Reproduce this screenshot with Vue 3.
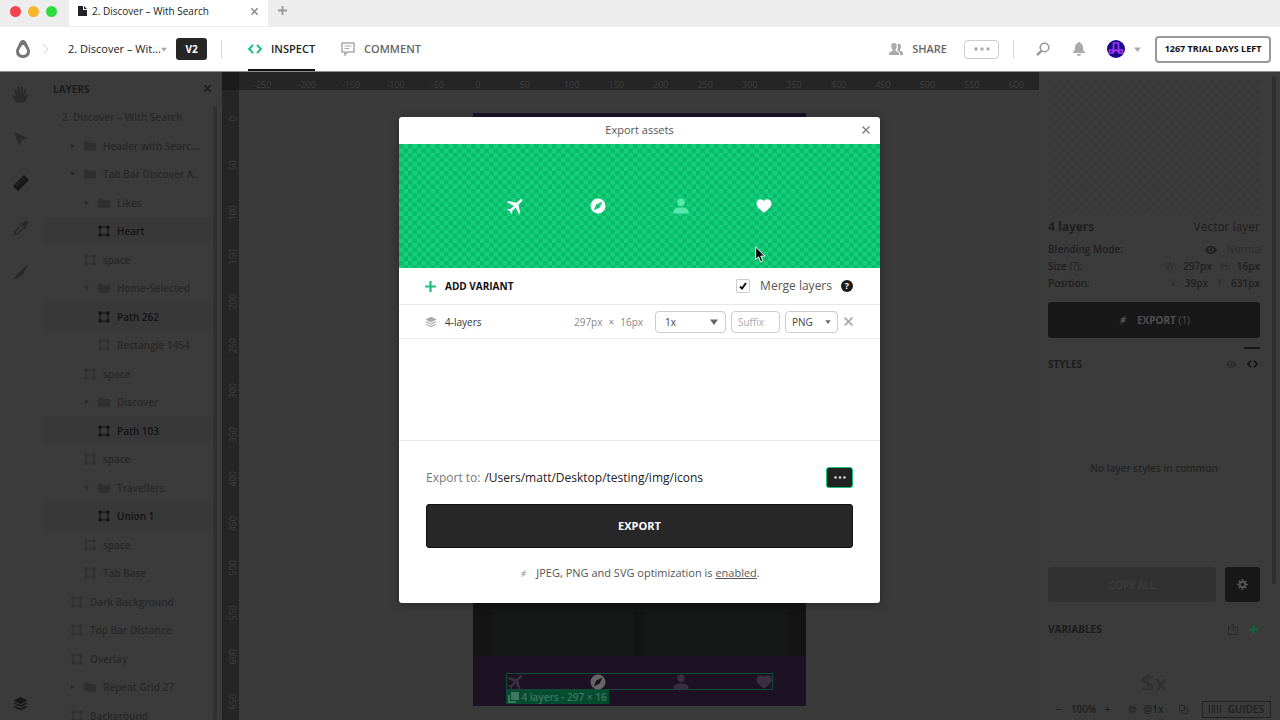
<template>
  <div class="app">
    <svg class="sprite" aria-hidden="true">
      <symbol id="plane" viewBox="2 3 18 18">
        <path transform="rotate(45 12 12)" d="M21 16v-2l-8-5V3.500C13 2.700 12.300 2 11.500 2S10 2.700 10 3.500V9l-8 5v2l8-2.500V19l-2 1.500V22l3.500-1 3.500 1v-1.500L13 19v-5.500z" />
      </symbol>
      <symbol id="compass" viewBox="0 0 16 16">
        <path fill-rule="evenodd" d="M8 .5a7.500 7.500 0 1 1 0 15 7.500 7.500 0 0 1 0-15zM12.400 3.600 6.300 6.500 3.600 12.400 9.700 9.500z" />
      </symbol>
      <symbol id="person" viewBox="0 0 16 16">
        <circle cx="8" cy="4.200" r="3.700" />
        <path d="M.5 15.500v-2C.5 11 4 9.500 8 9.500s7.500 1.500 7.500 4v2z" />
      </symbol>
      <symbol id="heart" viewBox="0 0 16 16">
        <path d="M8 14.800C3.500 11.200.5 8.700.5 5.500.5 3 2.300 1.200 4.600 1.200c1.400 0 2.600.7 3.400 1.800.8-1.100 2-1.800 3.400-1.800 2.300 0 4.100 1.800 4.100 4.300 0 3.200-3 5.700-7.500 9.300z" />
      </symbol>
      <symbol id="folder" viewBox="0 0 12 12">
        <path d="M0 3c0-1 .4-1.500 1.200-1.500H4L5.500 3H11c.7 0 1 .4 1 1v5.500c0 .7-.3 1-1 1H1c-.7 0-1-.3-1-1z" />
      </symbol>
      <symbol id="vector" viewBox="0 0 12 12">
        <path d="M2 2h8v8H2z" fill="none" stroke="currentColor" />
        <path d="M.5.5h3v3h-3zM8.500.5h3v3h-3zM.5 8.500h3v3h-3zM8.500 8.500h3v3h-3z" />
      </symbol>
      <symbol id="stack" viewBox="0 0 16 16">
        <path d="M8 1l7.500 3.700L8 8.400.5 4.700zM2.300 7.100 8 9.900l5.700-2.800 1.800.9L8 11.700.5 8zM2.300 10.500 8 13.300l5.700-2.800 1.800.9L8 15.100.5 11.400z" />
      </symbol>
      <symbol id="bolt" viewBox="0 0 12 12">
        <path d="M10.800.5 3 4.500 4.800 6 1 7.600 5 8 2 11.500 9.800 7.200 7.300 6 11.200 4.200 7.600 4z" />
      </symbol>
      <symbol id="cross" viewBox="0 0 10 10">
        <path d="M1.500 1.500l7 7M8.500 1.500l-7 7" fill="none" stroke="currentColor" stroke-width="1.600" />
      </symbol>
      <symbol id="plus" viewBox="0 0 10 10">
        <path d="M5 0v10M0 5h10" fill="none" stroke="currentColor" stroke-width="2" />
      </symbol>
      <symbol id="code" viewBox="0 0 14 10">
        <path d="M5 .8 1.200 5 5 9.200M9 .8 12.800 5 9 9.200" fill="none" stroke="currentColor" stroke-width="2" />
      </symbol>
      <symbol id="down" viewBox="0 0 8 6"><path d="M0 .5h8L4 6z" /></symbol>
      <symbol id="dots" viewBox="0 0 16 4">
        <circle cx="2" cy="2" r="1.700" /><circle cx="8" cy="2" r="1.700" /><circle cx="14" cy="2" r="1.700" />
      </symbol>
      <symbol id="eye" viewBox="0 0 12 8">
        <path fill-rule="evenodd" d="M6 0c3 0 5 2 6 4-1 2-3 4-6 4S1 6 0 4c1-2 3-4 6-4zm0 1.200a2.800 2.800 0 1 0 0 5.600 2.800 2.800 0 0 0 0-5.600zM6 2.500a1.500 1.500 0 1 1 0 3 1.500 1.500 0 0 1 0-3z" />
      </symbol>
      <symbol id="gear" viewBox="0 0 12 12">
        <circle cx="6" cy="6" r="3" fill="none" stroke="currentColor" stroke-width="2" />
        <path d="M6 0v3M6 9v3M0 6h3M9 6h3M1.800 1.800l2 2M8.200 8.200l2 2M1.800 10.200l2-2M8.200 3.800l2-2" stroke="currentColor" stroke-width="1.600" />
      </symbol>
    </svg>

    <header class="tabs">
      <div class="lights">
        <i class="light red"></i>
        <i class="light amber"></i>
        <i class="light green"></i>
      </div>
      <div class="tab">
        <svg width="9" height="10" viewBox="0 0 9 10"><path d="M0 0h5v4h4v6H0zM6 0l3 3H6z" /></svg>
        <span>2. Discover – With Search</span>
        <button class="tab-close" aria-label="Close tab"><svg width="9" height="9"><use href="#cross" /></svg></button>
      </div>
      <button class="tab-add" aria-label="New tab"><svg width="9" height="9"><use href="#plus" /></svg></button>
    </header>

    <nav class="toolbar">
      <button class="logo" aria-label="Home">
        <svg width="14" height="18" viewBox="0 0 14 18">
          <path fill-rule="evenodd" d="M7 0c2.500 0 3.600 2.500 4.600 5C12.600 7.400 14 8.800 14 11.400 14 15.200 11 18 7 18s-7-2.800-7-6.600C0 8.800 1.400 7.400 2.400 5 3.400 2.500 4.500 0 7 0zm0 5c-1.300 0-1.700 1.300-2.400 2.600C4 8.800 3 9.700 3 11.300 3 13.500 4.700 15 7 15s4-1.500 4-3.700c0-1.600-1-2.500-1.600-3.700C8.700 6.300 8.300 5 7 5z" />
        </svg>
      </button>
      <svg class="chevron" width="6" height="10" viewBox="0 0 6 10"><path d="M.5.5 5 5 .5 9.500" /></svg>
      <button class="crumb">2. Discover – Wit...<svg width="6" height="5"><use href="#down" /></svg></button>
      <button class="version">V2</button>
      <i class="rule"></i>
      <button class="mode active"><svg class="accent" width="14" height="10"><use href="#code" /></svg>INSPECT</button>
      <button class="mode">
        <svg width="14" height="14" viewBox="0 0 14 14">
          <path d="M1 1h12v9H6.500L4 12.800V10H1z" fill="none" stroke="currentColor" stroke-width="1.500" />
          <path d="M3.500 4h7M3.500 6.500h5" stroke="currentColor" />
        </svg>COMMENT
      </button>
      <div class="spacer"></div>
      <button class="mode share">
        <svg width="14" height="12" viewBox="0 0 14 12">
          <path d="M5 0c2 0 2.700 1.300 2.700 3S7 6.300 6.500 6.800v1l2.800 1.400c.5.300.7.8.7 2.800H0c0-2 .2-2.500.7-2.800l2.800-1.400v-1C3 6.300 2.300 4.700 2.300 3S3 0 5 0zM8.500 1.500c.5-.5 1-.7 1.500-.7 1.500 0 2 1 2 2.500 0 1.400-.5 2.700-1 3.200v1l2.200 1.200c.6.300.8 1 .8 3.300h-3c0-2-.3-3-1.200-3.500L8 7.500C9 6 9.200 3.500 8.500 1.500z" />
        </svg>SHARE
      </button>
      <button class="more" aria-label="More"><svg width="16" height="4"><use href="#dots" /></svg></button>
      <i class="rule"></i>
      <button class="glyph" aria-label="Search">
        <svg width="14" height="14" viewBox="0 0 14 14"><circle cx="8.500" cy="5.500" r="4.300" /><path d="M5.500 8.800 1 13" stroke-width="2.400" /></svg>
      </button>
      <button class="glyph bell" aria-label="Notifications">
        <svg width="14" height="14" viewBox="0 0 14 14"><path d="M7 0c.7 0 1 .4 1 1 2 .5 3 2 3 4.300 0 2.700.5 3.700 2 4.700v1H1v-1c1.500-1 2-2 2-4.700C3 3 4 1.500 6 1c0-.6.300-1 1-1zM5 12h4c0 1-.8 2-2 2s-2-1-2-2z" /></svg>
      </button>
      <button class="account" aria-label="Account">
        <svg width="18" height="18" viewBox="0 0 18 18">
          <circle cx="9" cy="9" r="9" fill="#1b0a8c" />
          <path d="M6.500 11V3h5v8M2.500 10h3.500v3H2.500zM12 10h3.500v3H12zM6 12l3-2 3 2" fill="none" stroke="#a238ee" stroke-width="1.700" />
        </svg>
        <svg class="caret" width="7" height="5"><use href="#down" /></svg>
      </button>
      <button class="trial">1267 TRIAL DAYS LEFT</button>
    </nav>

    <main class="workspace">
      <aside class="rail">
        <button aria-label="Pan">
          <svg width="17" height="17" viewBox="0 0 17 17"><path d="M4.500 16.500C2.500 14 1.500 11 0 9.500c.8-.8 2-.3 3.500 1.300L2.200 3.500c1-.6 1.600-.2 2 .8L5.600 8V1c.8-.7 1.700-.5 2 .3L8.200 7.500 9.300.8c.7-.8 1.700-.4 1.800.5L11 8l2-5.200c.8-.5 1.700-.1 1.500 1L13 10l2.200-1.500c1-.3 1.700.3 1.300 1-1.500 2-2.500 5-4.500 7z" /></svg>
        </button>
        <button aria-label="Select"><svg width="14" height="14" viewBox="0 0 14 14"><path d="M0 0l13.500 6L8 8l-3 5.500z" /></svg></button>
        <button class="on" aria-label="Measure">
          <svg width="16" height="16" viewBox="0 0 16 16">
            <path d="M0 11 11 0l5 5L5 16z" /><path d="M3.200 9l1.800 1.800M5.300 7l1.800 1.800M7.500 5l1.800 1.800M9.500 3l1.800 1.800" stroke="#3b3b3b" />
          </svg>
        </button>
        <button aria-label="Pick colour">
          <svg width="16" height="16" viewBox="0 0 16 16"><path fill-rule="evenodd" d="M9 3.500 12 .8c1-.9 3.900 1.500 3 3L12.500 7l1 1-1.500 1.500L6.500 4 8 2.500zM7 5.500 1.500 11 .5 15.500 5 14.500 10.500 9l-1-1L4.500 13l-2 .7.7-2.200L8 6.500z" /></svg>
        </button>
        <button aria-label="Slice"><svg width="15" height="16" viewBox="0 0 15 16"><path d="M0 15.500C3 11 6 8 8.500 6L14 .5l1 1-4 6 .5 1.500C9 13 5 14 0 15.500z" /></svg></button>
        <button class="on bottom" aria-label="Layers"><svg width="15" height="15"><use href="#stack" /></svg></button>
      </aside>

      <section class="layers">
        <div class="panel-head">
          <h2>LAYERS</h2>
          <button aria-label="Close layers"><svg width="9" height="9"><use href="#cross" /></svg></button>
        </div>
        <ul>
          <li v-for="(layer, i) in layers" :key="i" :class="['depth-' + layer.depth, { selected: layer.selected }]">
            <template v-if="layer.depth">
              <span class="toggle">
                <svg v-if="layer.icon === 'folder'" :class="{ closed: layer.closed }" width="5" height="4"><use href="#down" /></svg>
              </span>
              <svg class="kind" width="12" height="12"><use :href="'#' + layer.icon" /></svg>
            </template>
            {{ layer.name }}
          </li>
        </ul>
      </section>

      <section class="canvas">
        <div class="corner"></div>
        <div class="ruler-x">
          <div class="marks"><span v-for="n in marksX" :key="n">{{ n }}</span></div>
        </div>
        <div class="ruler-y">
          <div class="marks"><span v-for="n in marksY" :key="n">{{ n }}</span></div>
        </div>
        <div class="board">
          <div class="artboard">
            <div class="art-top"></div>
            <div class="art-cards"><i></i><i></i></div>
            <div class="art-tabs">
              <div class="selection">
                <svg v-for="id in assets" :key="id" :class="id" width="16" height="16"><use :href="'#' + id" /></svg>
              </div>
              <div class="tag">
                <svg width="11" height="11" viewBox="0 0 11 11"><path d="M0 3h2v6h6v2H0zM3 0h8v8H3z" /></svg>
                4 layers - 297 × 16
              </div>
            </div>
          </div>
        </div>
      </section>

      <aside class="inspector">
        <div class="scroll">
          <div class="thumb"></div>
          <div class="title"><h2>4 layers</h2><span>Vector layer</span></div>
          <dl>
            <div><dt>Blending Mode:</dt><dd class="blend"><svg width="12" height="8"><use href="#eye" /></svg><span>Normal</span></dd></div>
            <div><dt>Size <small>(?)</small>:</dt><dd><span>W:</span>297px<span>H:</span>16px</dd></div>
            <div><dt>Position:</dt><dd><span>X:</span>39px<span>Y:</span>631px</dd></div>
          </dl>
          <button class="export-dark"><svg width="10" height="10"><use href="#bolt" /></svg><b>EXPORT</b> (1)</button>
          <div class="panel-head styles">
            <h2>STYLES</h2>
            <button aria-label="Preview"><svg width="11" height="7"><use href="#eye" /></svg></button>
            <button class="on" aria-label="Code"><svg width="11" height="8"><use href="#code" /></svg></button>
          </div>
          <p class="none">No layer styles in common</p>
          <div class="copy">
            <button class="copy-all" disabled>COPY ALL</button>
            <button class="settings" aria-label="Settings"><svg width="11" height="11"><use href="#gear" /></svg></button>
          </div>
          <div class="panel-head variables">
            <h2>VARIABLES</h2>
            <button aria-label="Share variables">
              <svg width="10" height="12" viewBox="0 0 10 12"><path d="M3 4.500H.5v7h9v-7H7M5 8V1M3 3l2-2 2 2" fill="none" stroke="currentColor" /></svg>
            </button>
            <button class="add" aria-label="Add variable"><svg width="9" height="9"><use href="#plus" /></svg></button>
          </div>
          <div class="dollar">$x</div>
        </div>
        <footer>
          <button>−</button><span>100%</span><button>+</button>
          <svg class="scale" width="9" height="9"><use href="#gear" /></svg><span>@1x</span>
          <svg class="copies" width="9" height="9" viewBox="0 0 9 9"><path d="M.5.5h5v5h-5zM3 5.500v3h5.500V3h-3" /></svg>
          <button class="guides"><svg width="12" height="8" viewBox="0 0 12 8"><path d="M.5 0v8M3.500 0v8M5.500 0v8M8.500 0v8M11.500 0v8" stroke="currentColor" /></svg>GUIDES</button>
        </footer>
      </aside>
    </main>

    <div class="backdrop">
      <div class="dialog" role="dialog" aria-labelledby="dialog-title">
        <div class="dialog-head">
          <h1 id="dialog-title">Export assets</h1>
          <button aria-label="Close"><svg width="10" height="10"><use href="#cross" /></svg></button>
        </div>
        <div class="preview">
          <div class="assets">
            <svg v-for="id in assets" :key="id" :class="id" width="16" height="16"><use :href="'#' + id" /></svg>
          </div>
          <svg class="pointer" width="11" height="17" viewBox="0 0 11 17"><path d="M.7 1v12.500l2.900-2.700 2 4.900 2.200-1-2-4.600h4z" fill="#000" stroke="#fff" /></svg>
        </div>
        <div class="variants-head">
          <button class="add-variant"><svg width="11" height="11"><use href="#plus" /></svg>ADD VARIANT</button>
          <input id="merge" v-model="merge" type="checkbox" />
          <label for="merge">Merge layers</label>
          <span class="help">?</span>
        </div>
        <div class="variant">
          <svg class="stack" width="12" height="12"><use href="#stack" /></svg>
          <span class="name">4-layers</span>
          <span class="size">297px<small>×</small>16px</span>
          <div class="select scale">
            <select v-model="scale" aria-label="Scale"><option>1x</option><option>2x</option><option>3x</option></select>
            <svg width="8" height="6"><use href="#down" /></svg>
          </div>
          <input v-model="suffix" class="suffix" type="text" placeholder="Suffix" aria-label="Suffix" />
          <div class="select format">
            <select v-model="format" aria-label="Format"><option>PNG</option><option>JPEG</option><option>SVG</option></select>
            <svg width="6" height="4"><use href="#down" /></svg>
          </div>
          <button class="remove" aria-label="Remove variant"><svg width="11" height="11"><use href="#cross" /></svg></button>
        </div>
        <div class="blank"></div>
        <div class="destination">
          <div class="path">
            <span>Export to:</span>
            <strong>/Users/matt/Desktop/testing/img/icons</strong>
            <button aria-label="Choose folder"><svg width="12" height="3"><use href="#dots" /></svg></button>
          </div>
          <button class="export">EXPORT</button>
          <p><svg width="9" height="9"><use href="#bolt" /></svg>JPEG, PNG and SVG optimization is <a href="#">enabled</a>.</p>
        </div>
      </div>
    </div>
  </div>
</template>

<script setup>
import { ref } from 'vue'

const merge = ref(true)
const scale = ref('1x')
const suffix = ref('')
const format = ref('PNG')

const assets = ['plane', 'compass', 'person', 'heart']

const layers = [
  { name: '2. Discover – With Search', depth: 0 },
  { name: 'Header with Searc...', depth: 2, icon: 'folder', closed: true },
  { name: 'Tab Bar Discover A..', depth: 2, icon: 'folder' },
  { name: 'Likes', depth: 3, icon: 'folder' },
  { name: 'Heart', depth: 3, icon: 'vector', selected: true },
  { name: 'space', depth: 2, icon: 'vector' },
  { name: 'Home-Selected', depth: 3, icon: 'folder' },
  { name: 'Path 262', depth: 3, icon: 'vector', selected: true },
  { name: 'Rectangle 1454', depth: 3, icon: 'vector' },
  { name: 'space', depth: 2, icon: 'vector' },
  { name: 'Discover', depth: 3, icon: 'folder' },
  { name: 'Path 103', depth: 3, icon: 'vector', selected: true },
  { name: 'space', depth: 2, icon: 'vector' },
  { name: 'Travellers', depth: 3, icon: 'folder' },
  { name: 'Union 1', depth: 3, icon: 'vector', selected: true },
  { name: 'space', depth: 2, icon: 'vector' },
  { name: 'Tab Base', depth: 2, icon: 'vector' },
  { name: 'Dark Background', depth: 1, icon: 'vector' },
  { name: 'Top Bar Distance', depth: 1, icon: 'vector' },
  { name: 'Overlay', depth: 1, icon: 'vector' },
  { name: 'Repeat Grid 27', depth: 2, icon: 'folder', closed: true },
  { name: 'Background', depth: 1, icon: 'vector' },
]

const marksX = Array.from({ length: 18 }, (_, i) => i * 50 - 250)
const marksY = Array.from({ length: 14 }, (_, i) => i * 50)
</script>

<style>
body {
  margin: 0;
}
</style>

<style scoped>
.app {
  display: flex;
  flex-direction: column;
  height: 100vh;
  overflow: hidden;
  font-family: 'Open Sans', 'Noto Sans', sans-serif;
  font-size: 11px;
  line-height: 16px;
  color: #222;
  background: #fff;
}

.app *,
.app *::after {
  box-sizing: border-box;
}

.sprite {
  position: absolute;
  width: 0;
  height: 0;
}

svg {
  flex: none;
  fill: currentColor;
}

button,
input,
select {
  margin: 0;
  padding: 0;
  border: 0;
  background: none;
  font: inherit;
  color: inherit;
}

button {
  display: flex;
  align-items: center;
  justify-content: center;
}

h1,
h2,
p,
ul,
dl,
dd {
  margin: 0;
  padding: 0;
}

/* window tabs */
.tabs {
  display: flex;
  flex: none;
  height: 27px;
  background: #ededed;
}

.lights {
  display: flex;
  gap: 7px;
  width: 69px;
  padding: 6px 0 0 10px;
}

.light {
  width: 11px;
  height: 11px;
  border-radius: 50%;
}

.red {
  background: #f0434d;
}

.amber {
  background: #f5b52e;
}

.green {
  background: #2edb41;
}

.tab {
  display: flex;
  align-items: center;
  width: 199px;
  height: 26px;
  padding: 0 9px 4px;
  background: #fff;
}

.tab span {
  margin-left: 5px;
  font-size: 10px;
  font-weight: 500;
}

.tab-close {
  margin-left: auto;
  color: #888;
}

.tab-add {
  height: 20px;
  margin-left: 10px;
  color: #999;
}

/* main toolbar */
.toolbar {
  display: flex;
  flex: none;
  align-items: center;
  height: 45px;
  padding: 0 9px 0 16px;
  border-bottom: 1px solid #8c8c8c;
}

.logo {
  color: #777;
}

.chevron {
  margin-left: 13px;
  fill: none;
  stroke: #ccc;
}

.crumb {
  width: 94px;
  margin-left: 19px;
  justify-content: flex-start;
  white-space: nowrap;
}

.crumb svg {
  color: #aaa;
}

.version {
  width: 31px;
  height: 22px;
  margin-left: 14px;
  border-radius: 3px;
  background: #262626;
  color: #fff;
  font-size: 10px;
  font-weight: 700;
}

.rule {
  width: 1px;
  height: 18px;
  margin-left: 14px;
  background: #d8d8d8;
}

.mode {
  gap: 9px;
  height: 44px;
  margin-left: 26px;
  color: #666;
  font-weight: 600;
}

.mode svg {
  color: #aaa;
}

.mode.active {
  border-bottom: 2px solid #111;
  border-top: 2px solid transparent;
  color: #222;
}

.mode svg.accent {
  color: #19c37d;
}

.spacer {
  flex: 1;
}

.more {
  width: 35px;
  height: 19px;
  margin-left: 17px;
  border: 1px solid #ccc;
  border-radius: 4px;
  color: #aaa;
}

.glyph {
  margin-left: 22px;
}

.glyph svg {
  fill: none;
  stroke: #999;
  stroke-width: 1.6;
}

.bell svg {
  fill: #aaa;
  stroke: none;
}

.account {
  gap: 9px;
  margin-left: 21px;
}

.caret {
  color: #aaa;
}

.trial {
  width: 116px;
  height: 27px;
  margin-left: 14px;
  border: 2px solid #999;
  border-radius: 4px;
  color: #111;
  font-size: 9px;
  font-weight: 700;
  white-space: nowrap;
}

/* dimmed workspace */
.workspace {
  display: flex;
  flex: 1;
  min-height: 0;
  background: #3b3b3b;
}

.rail {
  display: grid;
  grid-template-rows: 44px 45px 44px 45px 44px 1fr;
  width: 44px;
  padding-right: 3px;
  color: #2a2a2a;
}

.rail .on {
  color: #171717;
}

.rail .bottom {
  align-self: end;
  height: 34px;
}

.layers {
  position: relative;
  width: 178px;
}

.layers::after {
  content: '';
  position: absolute;
  top: 34px;
  right: 5px;
  bottom: 0;
  width: 4px;
  border-radius: 2px;
  background: #303030;
}

.panel-head {
  display: flex;
  align-items: center;
}

.panel-head h2 {
  flex: 1;
  color: #1c1c1c;
  font-size: 10px;
  font-weight: 700;
}

.layers .panel-head {
  height: 31px;
  padding: 2px 10px 0 9px;
  color: #191919;
}

.layers ul {
  display: grid;
  grid-auto-rows: 28px 29px;
  margin-right: 11px;
  list-style: none;
}

.layers li {
  display: flex;
  align-items: center;
  color: #282828;
  font-size: 10px;
  font-weight: 600;
  white-space: nowrap;
}

.layers li.selected {
  background: #383838;
  color: #131313;
}

.layers .depth-0 {
  padding-left: 18px;
}

.depth-1 {
  padding-left: 10px;
}

.depth-2 {
  padding-left: 23px;
}

.depth-3 {
  padding-left: 37px;
}

.toggle {
  display: flex;
  width: 17px;
  padding-left: 3px;
}

.closed {
  transform: rotate(-90deg);
}

.kind {
  margin-right: 7px;
  color: #2f2f2f;
}

.selected .kind {
  color: #131313;
}

/* canvas */
.canvas {
  display: grid;
  grid-template-columns: 17px 1fr;
  grid-template-rows: 18px 1fr;
  flex: 1;
  min-width: 0;
  min-height: 0;
}

.corner {
  background: #1b1b1b;
}

.ruler-x,
.ruler-y {
  display: flex;
  overflow: hidden;
  background: #252525;
  color: #404040;
  font-size: 9px;
}

.ruler-x .marks {
  display: grid;
  grid-auto-flow: column;
  grid-auto-columns: 1fr;
  flex: 1;
  margin: 5px -14px 0 14px;
}

.ruler-y {
  flex-direction: column;
}

.ruler-y .marks {
  display: grid;
  grid-auto-rows: 1fr;
  flex: 1;
  margin: 26px 0 -18px 4px;
}

.ruler-y span {
  justify-self: start;
  align-self: start;
  writing-mode: vertical-rl;
  transform: rotate(180deg);
  line-height: 14px;
}

.board {
  display: flex;
  justify-content: center;
  align-items: flex-start;
  padding-top: 23px;
  overflow: hidden;
  background: #3a3a3a;
}

.artboard {
  display: flex;
  flex-direction: column;
  width: 333px;
  height: 593px;
  background: #141414;
}

.art-top {
  height: 60px;
  background: #1d1025;
}

.art-cards {
  display: grid;
  grid-template-columns: 1fr 1fr;
  gap: 10px;
  flex: 1;
  padding: 436px 18px 0;
}

.art-cards i {
  background: #161717;
}

.art-tabs {
  height: 50px;
  padding: 17px 33px 0;
  background: #1c1224;
}

.selection {
  display: flex;
  justify-content: space-between;
  height: 17px;
  border: 1px solid #0f4b36;
  color: #3a2e41;
}

.selection .compass {
  color: #656565;
}

.tag {
  display: flex;
  align-items: center;
  gap: 3px;
  width: max-content;
  height: 14px;
  padding: 0 2px;
  background: #044c30;
  color: #3f7660;
  font-size: 10px;
  font-weight: 600;
  white-space: nowrap;
}

/* inspector */
.inspector {
  display: flex;
  flex-direction: column;
  width: 241px;
  color: #1f1f1f;
  font-weight: 600;
}

.scroll {
  position: relative;
  display: flex;
  flex-direction: column;
  flex: 1;
  min-height: 0;
  padding: 8px 20px 0 9px;
  overflow: hidden;
}

.scroll::after {
  content: '';
  position: absolute;
  top: 4px;
  right: 4px;
  width: 4px;
  height: 508px;
  border-radius: 2px;
  background: #2e2e2e;
}

.thumb {
  height: 132px;
  flex: none;
  background: url("data:image/svg+xml,%3Csvg xmlns='http://www.w3.org/2000/svg' width='9' height='9'%3E%3Cpath d='M0 0h9v9H0z' fill='%233c3c3c'/%3E%3Cpath d='M0 0h4.500v9H9V4.500H0z' fill='%23373737'/%3E%3C/svg%3E");
}

.title {
  display: flex;
  justify-content: space-between;
  margin: 7px 0 6px;
  font-size: 12px;
}

.title span {
  font-weight: 500;
}

.title h2 {
  font-size: 12px;
  font-weight: 700;
}

dl div {
  display: flex;
  justify-content: space-between;
  line-height: 17px;
}

dt,
dd {
  font-size: 10px;
}

dt small {
  font-size: 10px;
  font-weight: 400;
}

dd span {
  margin: 0 6px 0 9px;
  color: #2b2b2b;
  font-weight: 400;
}

.blend {
  display: flex;
  align-items: center;
}

.blend span {
  margin: 0 -2px 0 10px;
}

.export-dark {
  flex: none;
  height: 36px;
  margin-top: 10px;
  border-radius: 3px;
  background: #181818;
  color: #505050;
  font-weight: 400;
  font-size: 10px;
  white-space: pre;
}

.export-dark b {
  margin-left: 9px;
}

.styles {
  gap: 10px;
  margin-top: 18px;
  color: #2c2c2c;
}

.styles .on {
  position: relative;
  margin-right: 2px;
  color: #111;
}

.styles .on::after {
  content: '';
  position: absolute;
  top: -13px;
  left: -3px;
  width: 16px;
  height: 2px;
  background: #181818;
}

.none {
  margin-top: 88px;
  text-align: center;
  font-size: 10px;
  color: #232323;
}

.copy {
  display: flex;
  gap: 9px;
  margin-top: 91px;
}

.copy button {
  height: 35px;
  border-radius: 3px;
}

.copy-all {
  flex: 1;
  background: #313131;
  color: #3e3e3e;
  font-size: 10px;
}

.settings {
  width: 35px;
  background: #181818;
  color: #555;
}

.variables {
  gap: 11px;
  margin-top: 19px;
  color: #292929;
}

.variables .add {
  margin-right: 2px;
  color: #086d46;
}

.dollar {
  margin-top: 30px;
  text-align: center;
  color: #303030;
  font-size: 24px;
  line-height: 32px;
}

.inspector footer {
  display: flex;
  flex: none;
  align-items: center;
  height: 30px;
  padding: 7px 9px 0 17px;
  border-top: 1px solid #393939;
  font-size: 10px;
}

.inspector footer span {
  margin: 0 8px 0 9px;
}

.inspector footer .scale {
  margin-left: 18px;
  color: #292929;
}

.inspector footer .scale + span {
  margin: 0 16px 0 6px;
}

.copies {
  fill: none;
  stroke: #292929;
}

.guides {
  gap: 7px;
  height: 17px;
  margin-left: auto;
  padding: 0 6px;
  border: 1px solid #222;
}

/* export dialog */
.backdrop {
  position: absolute;
  inset: 0 1px 0 0;
  display: grid;
  place-items: center;
}

.dialog {
  width: 481px;
  border-radius: 3px;
  overflow: hidden;
  background: #fff;
  box-shadow: 0 2px 10px rgba(0, 0, 0, 0.35);
}

.dialog-head {
  display: flex;
  align-items: center;
  justify-content: flex-end;
  height: 27px;
  padding: 0 9px 2px 0;
  color: #888;
}

.dialog-head h1 {
  flex: 1;
  padding-left: 19px;
  color: #555;
  font-size: 11px;
  font-weight: 500;
  text-align: center;
}

.preview {
  position: relative;
  display: flex;
  align-items: center;
  justify-content: center;
  height: 124px;
  background: url("data:image/svg+xml,%3Csvg xmlns='http://www.w3.org/2000/svg' width='9' height='9'%3E%3Cpath d='M0 0h9v9H0z' fill='%2311d17b'/%3E%3Cpath d='M0 0h4.500v9H9V4.500H0z' fill='%230cba69'/%3E%3C/svg%3E");
}

.assets {
  display: flex;
  justify-content: space-between;
  width: 265px;
  color: #fff;
}

.assets .person {
  color: #56e8aa;
}

.pointer {
  position: absolute;
  top: 102px;
  left: 356px;
}

.variants-head {
  display: flex;
  align-items: center;
  height: 37px;
  padding: 0 27px 0 26px;
  border-bottom: 1px solid #e8e8e8;
}

.add-variant {
  gap: 9px;
  margin-right: auto;
  color: #111;
  font-size: 10px;
  font-weight: 700;
}

.add-variant svg {
  color: #19c37d;
}

.variants-head input {
  appearance: none;
  width: 14px;
  height: 14px;
  border: 1px solid #ccc;
  border-radius: 2px;
}

.variants-head input:checked {
  background: url("data:image/svg+xml,%3Csvg xmlns='http://www.w3.org/2000/svg' viewBox='0 0 12 12'%3E%3Cpath d='M3 6.500l2 2 4-5.500' fill='none' stroke='%23111' stroke-width='2'/%3E%3C/svg%3E") center / 12px 12px no-repeat;
}

.variants-head label {
  margin: 0 9px 0 10px;
  color: #555;
  font-size: 12px;
  font-weight: 500;
}

.help {
  width: 12px;
  height: 12px;
  border-radius: 50%;
  background: #1b1b1b;
  color: #fff;
  font-size: 9px;
  line-height: 12px;
  font-weight: 700;
  text-align: center;
}

.variant {
  display: flex;
  align-items: center;
  height: 34px;
  padding: 0 26px;
  border-bottom: 1px solid #e8e8e8;
  font-size: 10px;
}

.stack {
  color: #aaa;
}

.name {
  margin: 0 auto 0 8px;
  color: #333;
}

.size {
  margin-right: 12px;
  color: #888;
}

.size small {
  margin: 0 6px;
  font-size: 10px;
}

.select {
  display: flex;
  position: relative;
  align-items: center;
  color: #666;
}

.select select,
.suffix {
  width: 100%;
  height: 22px;
  padding: 0 6px;
  border: 1px solid #ccc;
  border-radius: 4px;
  appearance: none;
  color: #444;
}

.select svg {
  position: absolute;
  right: 8px;
  pointer-events: none;
}

.select.scale {
  width: 71px;
}

.select.scale select {
  padding-left: 9px;
}

.format {
  width: 53px;
}

.select svg[width='6'] {
  right: 7px;
}

.variant .suffix {
  width: 49px;
  margin: 0 5px;
}

.suffix::placeholder {
  color: #aaa;
}

.remove {
  margin-left: 5px;
  color: #aaa;
}

.blank {
  height: 102px;
  border-bottom: 1px solid #e8e8e8;
}

.destination {
  padding: 26px 27px 22px;
}

.path {
  display: flex;
  align-items: center;
  gap: 4px;
  font-size: 12px;
}

.path span {
  color: #777;
}

.path strong {
  font-weight: 400;
}

.path button {
  width: 27px;
  height: 21px;
  margin-left: auto;
  border: 1px solid #19c37d;
  border-radius: 3px;
  background: #222;
  color: #ddd;
}

.export {
  width: 100%;
  height: 44px;
  margin: 16px 0 17px;
  border: 1px solid #111;
  border-radius: 3px;
  background: #272727;
  color: #fff;
  font-weight: 700;
}

.destination p {
  display: flex;
  align-items: center;
  justify-content: center;
  color: #555;
  font-weight: 500;
  white-space: pre;
}

.destination p svg {
  margin-right: 8px;
  color: #bbb;
}

.destination a {
  color: inherit;
}
</style>
